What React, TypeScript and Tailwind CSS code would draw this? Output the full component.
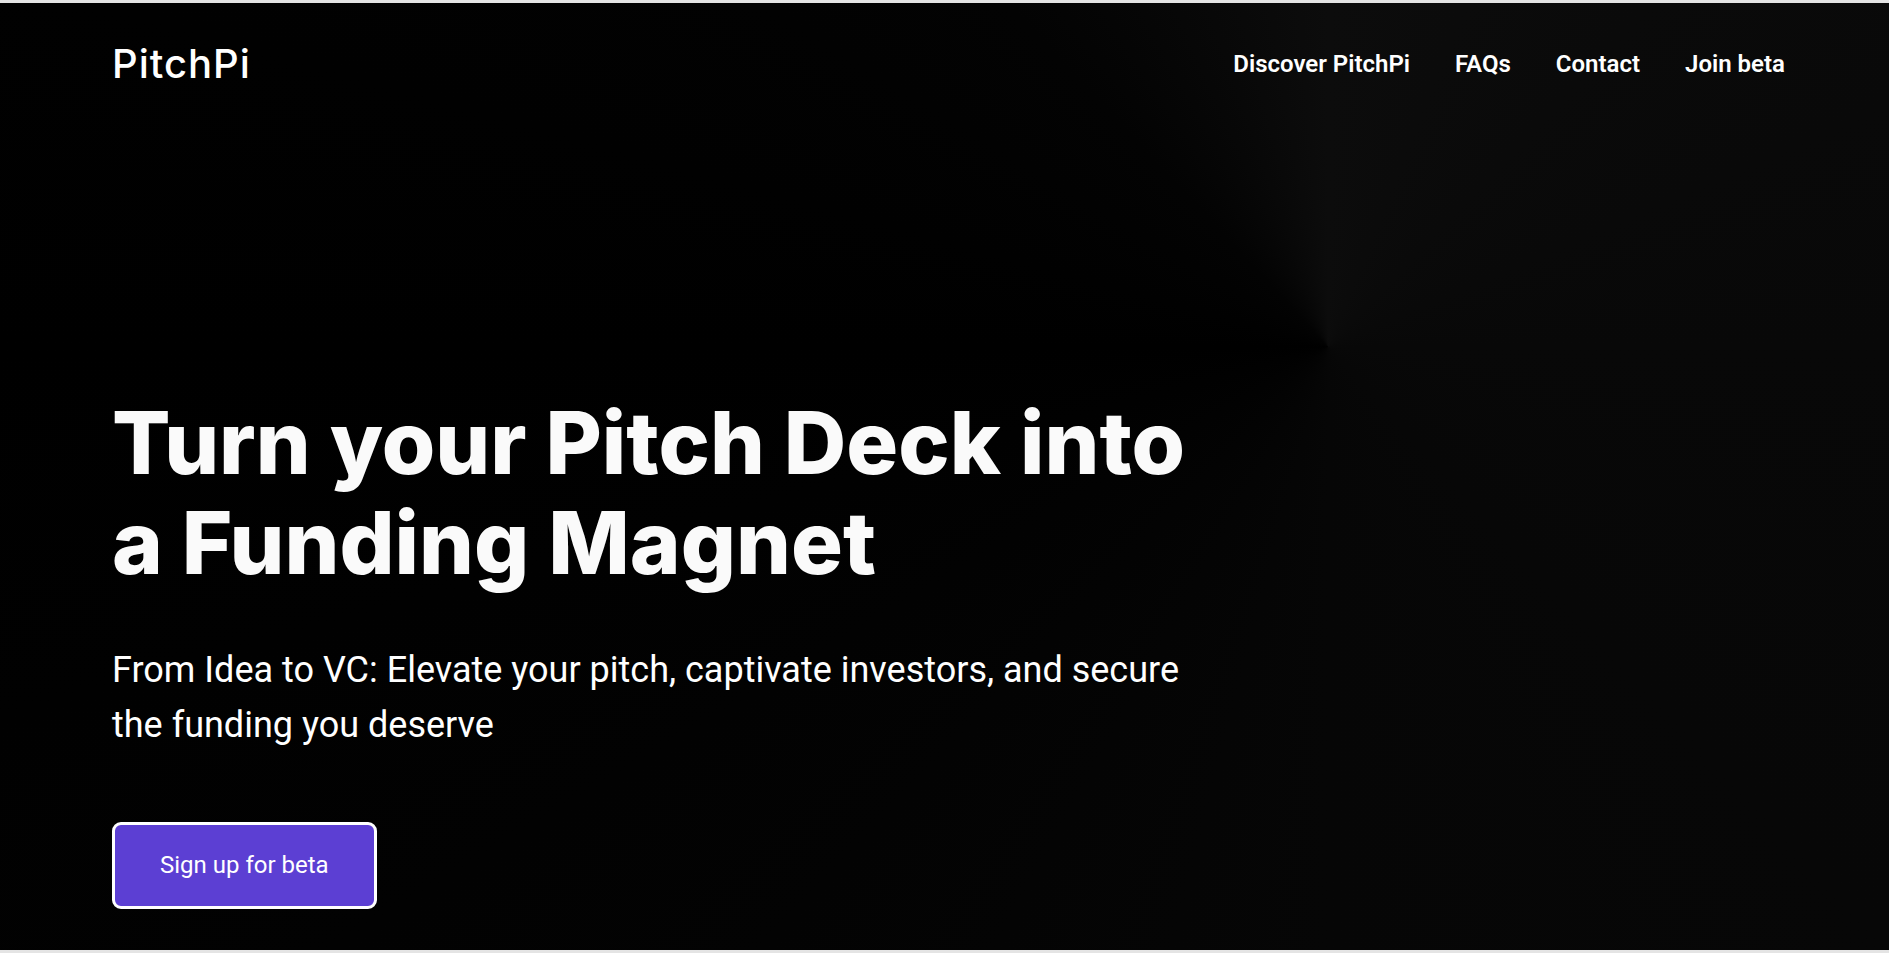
import React from "react";

const navLinks = ["Discover PitchPi", "FAQs", "Contact", "Join beta"];

export default function App() {
  return (
    <div className="min-h-screen bg-[#e4e4e4] pt-[3px] font-['Roboto',sans-serif]">
      <section className="h-[947px] bg-[conic-gradient(from_0deg_at_70.3%_36.3%,#0c0c0c,#0a0a0a_12%,#080808_25%,#070707_38%,#060606_50%,#030303_62%,#000000_75%,#030303_88%,#0c0c0c)] text-white">
        <header className="flex h-[121px] items-center justify-between pl-[112px] pr-[104px]">
          <a href="#" className="font-['Inter',sans-serif] text-[40px] font-medium leading-none tracking-[0.025em]">
            PitchPi
          </a>
          <nav className="flex items-center gap-[45px]">
            {navLinks.map((l) => (
              <a key={l} href="#" className="text-[24px] font-semibold leading-none">
                {l}
              </a>
            ))}
          </nav>
        </header>

        <div className="flex flex-col items-start pl-[112px] pt-[269px]">
          <h1 className="w-[1100px] font-['Inter',sans-serif] text-[86.5px] font-extrabold leading-[100px] text-[#fafafa]">
            Turn your Pitch Deck into a Funding Magnet
          </h1>
          <p className="mt-[50px] w-[1095px] text-[36px] leading-[55px] text-white">
            From Idea to VC: Elevate your pitch, captivate investors, and secure the funding you deserve
          </p>
          <button className="mt-[69px] rounded-[9px] border-[3px] border-white bg-[#5c3fd3] px-[45px] py-[22px] text-[24px] leading-[37px] text-white">
            Sign up for beta
          </button>
        </div>
      </section>
    </div>
  );
}
